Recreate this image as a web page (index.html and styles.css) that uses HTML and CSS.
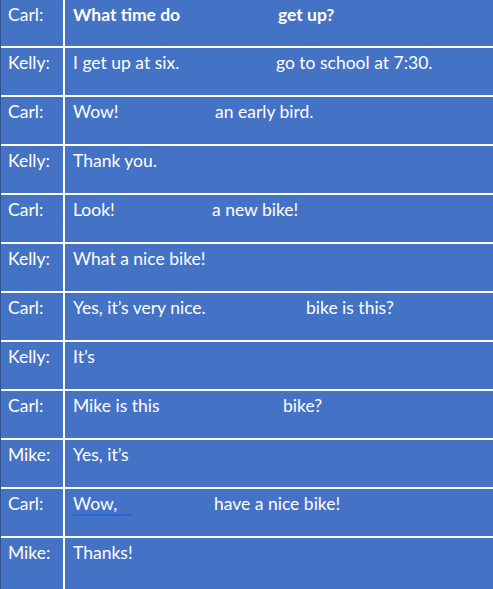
FILE: index.html
```html
<!DOCTYPE html>
<html>
<head>
<meta charset="utf-8">
<link rel="stylesheet" href="styles.css">
</head>
<body>
<div class="table">
  <div class="row"><div class="who">Carl:</div><div class="say bold"><span class="lead w205">What time do</span><span>get up?</span></div></div>
  <div class="row"><div class="who">Kelly:</div><div class="say"><span class="lead w203">I get up at six.</span><span>go to school at 7:30.</span></div></div>
  <div class="row"><div class="who">Carl:</div><div class="say"><span class="lead w142">Wow!</span><span>an early bird.</span></div></div>
  <div class="row"><div class="who">Kelly:</div><div class="say">Thank you.</div></div>
  <div class="row"><div class="who">Carl:</div><div class="say"><span class="lead w139">Look!</span><span>a new bike!</span></div></div>
  <div class="row"><div class="who">Kelly:</div><div class="say">What a nice bike!</div></div>
  <div class="row"><div class="who">Carl:</div><div class="say"><span class="lead w233">Yes, it’s very nice.</span><span>bike is this?</span></div></div>
  <div class="row"><div class="who">Kelly:</div><div class="say">It’s</div></div>
  <div class="row"><div class="who">Carl:</div><div class="say"><span class="lead w210">Mike is this</span><span>bike?</span></div></div>
  <div class="row"><div class="who">Mike:</div><div class="say">Yes, it’s</div></div>
  <div class="row"><div class="who">Carl:</div><div class="say"><span class="lead w141"><span class="under">Wow,</span></span><span>have a nice bike!</span></div></div>
  <div class="row last"><div class="who">Mike:</div><div class="say">Thanks!</div></div>
</div>
</body>
</html>
```

FILE: styles.css
```css
html, body {
  margin: 0;
  padding: 0;
  background: #4472c4;
}
.table {
  width: 493px;
  font-family: Lato, "Open Sans", sans-serif;
  font-size: 17.5px;
  color: #ffffff;
  border-left: 1px solid #2f528f;
  box-sizing: border-box;
}
.row {
  display: grid;
  grid-template-columns: 64px 1fr;
  height: 49px;
  box-sizing: border-box;
  border-bottom: 2px solid #ffffff;
}
.row:first-child {
  height: 48px;
}
.row.last {
  border-bottom: none;
  height: 51px;
}
.who {
  border-right: 2px solid #ffffff;
  padding: 4px 0 0 7px;
  line-height: 21px;
}
.say {
  padding: 4px 0 0 8px;
  line-height: 21px;
  white-space: nowrap;
}
.bold {
  font-weight: 700;
}
.lead {
  display: inline-block;
}
.w205 { width: 205px; }
.w203 { width: 203px; }
.w142 { width: 142px; }
.w139 { width: 139px; }
.w233 { width: 233px; }
.w210 { width: 210px; }
.w141 { width: 141px; }
.under {
  display: inline-block;
  width: 59px;
  line-height: 20px;
  border-bottom: 2px solid #2a62e6;
}
```
